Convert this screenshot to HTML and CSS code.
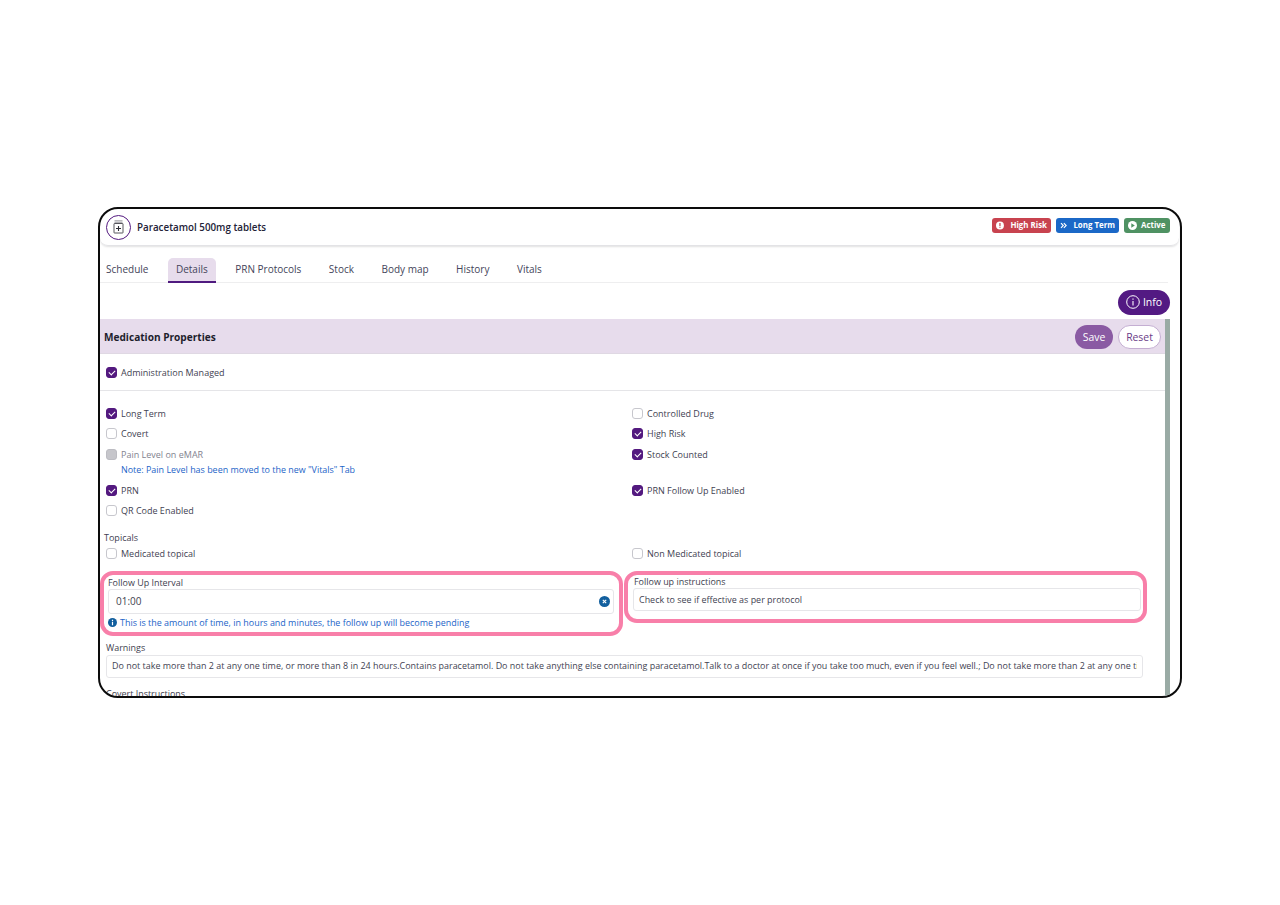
FILE: index.html
```html
<!DOCTYPE html>
<html lang="en">
<head>
<meta charset="utf-8">
<title>Paracetamol 500mg tablets</title>
<link rel="stylesheet" href="styles.css">
</head>
<body>
<main class="frame">
  <header class="head">
    <div class="title">
      <span class="avatar">
        <svg width="13" height="14" viewBox="0 0 13 14" fill="none" stroke="#2b2b33" stroke-width=".8"><path d="M2.500 .8h8M2.500 2.300h8" stroke="#85858c"/><rect x="2" y="3.500" width="9" height="9.500" rx=".5"/><path d="M6.500 6v5M4 8.500h5" stroke-width="1.100"/></svg>
      </span>
      <span class="name">Paracetamol 500mg tablets</span>
    </div>
    <div class="badges">
      <span class="badge red"><svg width="9" height="9" viewBox="0 0 9 9"><circle cx="4.500" cy="4.500" r="4.500" fill="#fff"/><path d="M4.500 1.800v3.200M4.500 5.800v1.300" stroke="#c8434f" stroke-width="1.400"/></svg>High Risk</span>
      <span class="badge blue"><svg width="9" height="9" viewBox="0 0 9 9" fill="none" stroke="#fff" stroke-width="1.400"><path d="M1.200 1.500 4 4.500 1.200 7.500M4.700 1.500 7.500 4.500 4.700 7.500"/></svg>Long Term</span>
      <span class="badge green"><svg width="9" height="9" viewBox="0 0 9 9"><circle cx="4.500" cy="4.500" r="4.500" fill="#fff"/><path d="M3.300 2.300 6.800 4.500 3.300 6.700z" fill="#4f9263"/></svg>Active</span>
    </div>
  </header>
  <nav class="tabs">
    <a class="tab">Schedule</a>
    <a class="tab active">Details</a>
    <a class="tab">PRN Protocols</a>
    <a class="tab">Stock</a>
    <a class="tab">Body map</a>
    <a class="tab">History</a>
    <a class="tab">Vitals</a>
  </nav>
  <div class="info-row">
    <button class="info"><svg width="14" height="14" viewBox="0 0 14 14" fill="none" stroke="#fff"><circle cx="7" cy="7" r="6.300"/><path d="M7 6v4.500M7 3.500v1.200" stroke-width="1.100"/></svg>Info</button>
  </div>
  <section class="panel">
    <div class="bar">
      <h2>Medication Properties</h2>
      <div class="bar-actions">
        <button class="save">Save</button>
        <button class="reset">Reset</button>
      </div>
    </div>
    <div class="managed">
      <label class="check"><span class="box on"></span>Administration Managed</label>
    </div>
    <div class="checks">
      <div class="col">
        <label class="check"><span class="box on"></span>Long Term</label>
        <label class="check"><span class="box"></span>Covert</label>
        <div class="pain">
          <label class="check muted"><span class="box off"></span>Pain Level on eMAR</label>
          <p class="note">Note: Pain Level has been moved to the new "Vitals" Tab</p>
        </div>
        <label class="check"><span class="box on"></span>PRN</label>
        <label class="check"><span class="box"></span>QR Code Enabled</label>
      </div>
      <div class="col">
        <label class="check"><span class="box"></span>Controlled Drug</label>
        <label class="check"><span class="box on"></span>High Risk</label>
        <div class="pain">
          <label class="check"><span class="box on"></span>Stock Counted</label>
          <p class="note">&nbsp;</p>
        </div>
        <label class="check"><span class="box on"></span>PRN Follow Up Enabled</label>
      </div>
    </div>
    <div class="topicals">
      <div class="topicals-label">Topicals</div>
      <div class="topicals-row">
        <label class="check"><span class="box"></span>Medicated topical</label>
        <label class="check"><span class="box"></span>Non Medicated topical</label>
      </div>
    </div>
    <div class="follow">
      <div class="hl hl-left">
        <div class="lbl">Follow Up Interval</div>
        <div class="input tall">01:00<svg class="clear" width="11" height="11" viewBox="0 0 11 11"><circle cx="5.500" cy="5.500" r="5.500" fill="#125f9e"/><path d="M3.800 3.800l3.400 3.400M7.200 3.800 3.800 7.200" stroke="#fff" stroke-width="1.100"/></svg></div>
        <div class="hint"><svg width="9" height="9" viewBox="0 0 9 9"><circle cx="4.500" cy="4.500" r="4.500" fill="#125f9e"/><path d="M4.500 3.800v3.400M4.500 1.700v1.200" stroke="#fff" stroke-width="1.200"/></svg>This is the amount of time, in hours and minutes, the follow up will become pending</div>
      </div>
      <div class="hl hl-right">
        <div class="lbl indent">Follow up instructions</div>
        <div class="input short">Check to see if effective as per protocol</div>
      </div>
    </div>
    <div class="warn">
      <div class="lbl">Warnings</div>
      <div class="input"><span class="clip">Do not take more than 2 at any one time, or more than 8 in 24 hours.Contains paracetamol. Do not take anything else containing paracetamol.Talk to a doctor at once if you take too much, even if you feel well.; Do not take more than 2 at any one time, or more than 8 in 24 hours.</span></div>
      <div class="lbl covert">Covert Instructions</div>
    </div>
  </section>
</main>
</body>
</html>
```
FILE: styles.css
```css
* { box-sizing: border-box; }
html, body { margin: 0; height: 905px; background: #fff; overflow: hidden; }
body { padding: 207px 98px; font-family: "Open Sans", "Liberation Sans", sans-serif; color: #3f3f52; font-size: 9px; }
.frame { width: 1084px; height: 491px; border: 2px solid #0c0c0c; border-radius: 20px; overflow: hidden; background: #fff; }

.head { height: 37px; margin-right: 1px; padding: 0 9px 0 6px; display: flex; justify-content: space-between; align-items: center; border-bottom: 1px solid #e3e3e6; border-radius: 0 0 8px 8px; box-shadow: 0 1px 2px rgba(0,0,0,.12); }
.title { display: flex; align-items: center; gap: 6px; }
.avatar { width: 25px; height: 25px; border: 1.500px solid #53197f; border-radius: 50%; display: flex; align-items: center; justify-content: center; }
.name { font-size: 9.800px; font-weight: 600; color: #232338; }
.badges { display: flex; gap: 5px; margin-top: -3px; }
.badge { height: 15px; padding: 0 4px 1px; display: flex; align-items: center; gap: 6px; border-radius: 3px; color: #fff; font-size: 7.900px; font-weight: 700; white-space: nowrap; }
.badge svg { margin-top: 1px; }
.red { background: #c8434f; width: 59px; gap: 6.500px; }
.blue { background: #1b68c7; width: 63px; }
.green { background: #4f9263; width: 46px; gap: 4px; }

.tabs { height: 37px; margin: 0 12px 0 -2px; padding-top: 12px; display: flex; gap: 11.500px; border-bottom: 1px solid #eeeeef; }
.tab { height: 25px; padding: 0 8px 3px; display: flex; align-items: center; font-size: 10px; color: #44445a; border-radius: 5px 5px 0 0; }
.tab.active { background: #e7dcec; border-bottom: 2px solid #4f1a7f; padding-bottom: 1px; }

.info-row { height: 36px; padding: 7px 10px 0 0; display: flex; justify-content: flex-end; }
.info { height: 25px; width: 52px; padding: 0 0 1px; border: 0; border-radius: 13px; background: #531a83; color: #fff; font: 10.500px "Open Sans", sans-serif; display: flex; align-items: center; justify-content: center; gap: 3px; }

.panel { width: 1071px; margin-left: -1px; border-right: 5px solid #9aaba5; }
.bar { height: 35px; padding: 1px 4px 0 5px; display: flex; justify-content: space-between; align-items: center; background: #e7dcec; border-bottom: 1px solid #dfd8e3; }
.bar h2 { margin: 0; font-size: 10.100px; font-weight: 700; color: #1e1e2c; }
.bar-actions { display: flex; gap: 5px; }
.save, .reset { height: 24px; padding: 0; border-radius: 12px; font: 10.400px "Open Sans", sans-serif; }
.save { width: 38px; background: #8a5aa3; color: #fff; border: 0; }
.reset { width: 43px; background: #fff; color: #6a3d88; border: 1px solid #c4aed2; }

.check { height: 14px; display: flex; align-items: center; gap: 4px; white-space: nowrap; }
.box { width: 11px; height: 11px; border: 1px solid #c7c7cd; border-radius: 3px; background: #fff; flex: none; position: relative; }
.box.on { background: #53197f; border-color: #53197f; }
.box.on::after { content: ""; position: absolute; left: 2px; top: 2px; width: 5px; height: 3px; border-left: 1.500px solid #fff; border-bottom: 1.500px solid #fff; transform: rotate(-45deg); }
.box.off { background: #c6c6cb; border-color: #bcbcc2; }
.muted { color: #83838f; }

.managed { height: 37px; padding: 11px 0 0 7px; border-bottom: 1px solid #e5e5e8; }

.checks { display: grid; grid-template-columns: 526px 1fr; padding: 15px 0 0 7px; }
.col { display: flex; flex-direction: column; gap: 6.700px; }
.pain { display: flex; flex-direction: column; }
.note { margin: 2px 0 0 15px; height: 13px; line-height: 13px; color: #1c64c8; font-size: 8.950px; }

.topicals { padding: 13.200px 0 0 5px; }
.topicals-label { height: 14px; line-height: 14px; }
.topicals-row { display: grid; grid-template-columns: 526px 1fr; padding: 2px 0 0 2px; }

.follow { height: 65px; margin-top: 10px; display: flex; align-items: flex-start; padding-left: 1px; gap: 1px; }
.hl { border: 4px solid #f87fa9; border-radius: 13px; }
.hl-left { width: 523px; height: 65px; padding: 1px 5px 0 4px; }
.hl-right { width: 523px; height: 52px; padding: 0 2px 0 5px; }
.lbl { height: 13px; line-height: 13px; font-size: 8.950px; color: #3e3e4e; }
.lbl.indent { padding-left: 1px; }
.input { height: 24px; padding: 0 5px; display: flex; align-items: center; border: 1px solid #e6e6e9; border-radius: 3px; background: #fff; font-size: 8.950px; }
.input.tall { height: 25px; padding: 0 3px 0 7px; justify-content: space-between; font-size: 10px; }
.input.short { height: 23px; }
.hint { margin-top: 2.500px; height: 13px; display: flex; align-items: center; gap: 3px; color: #1c64c8; font-size: 8.950px; }

.warn { padding: 5px 22px 0 7px; }
.warn .input { height: 23px; margin-top: 1px; padding-bottom: 1px; }
.clip { display: block; white-space: nowrap; overflow: hidden; }
.covert { margin-top: 9px; }
```
